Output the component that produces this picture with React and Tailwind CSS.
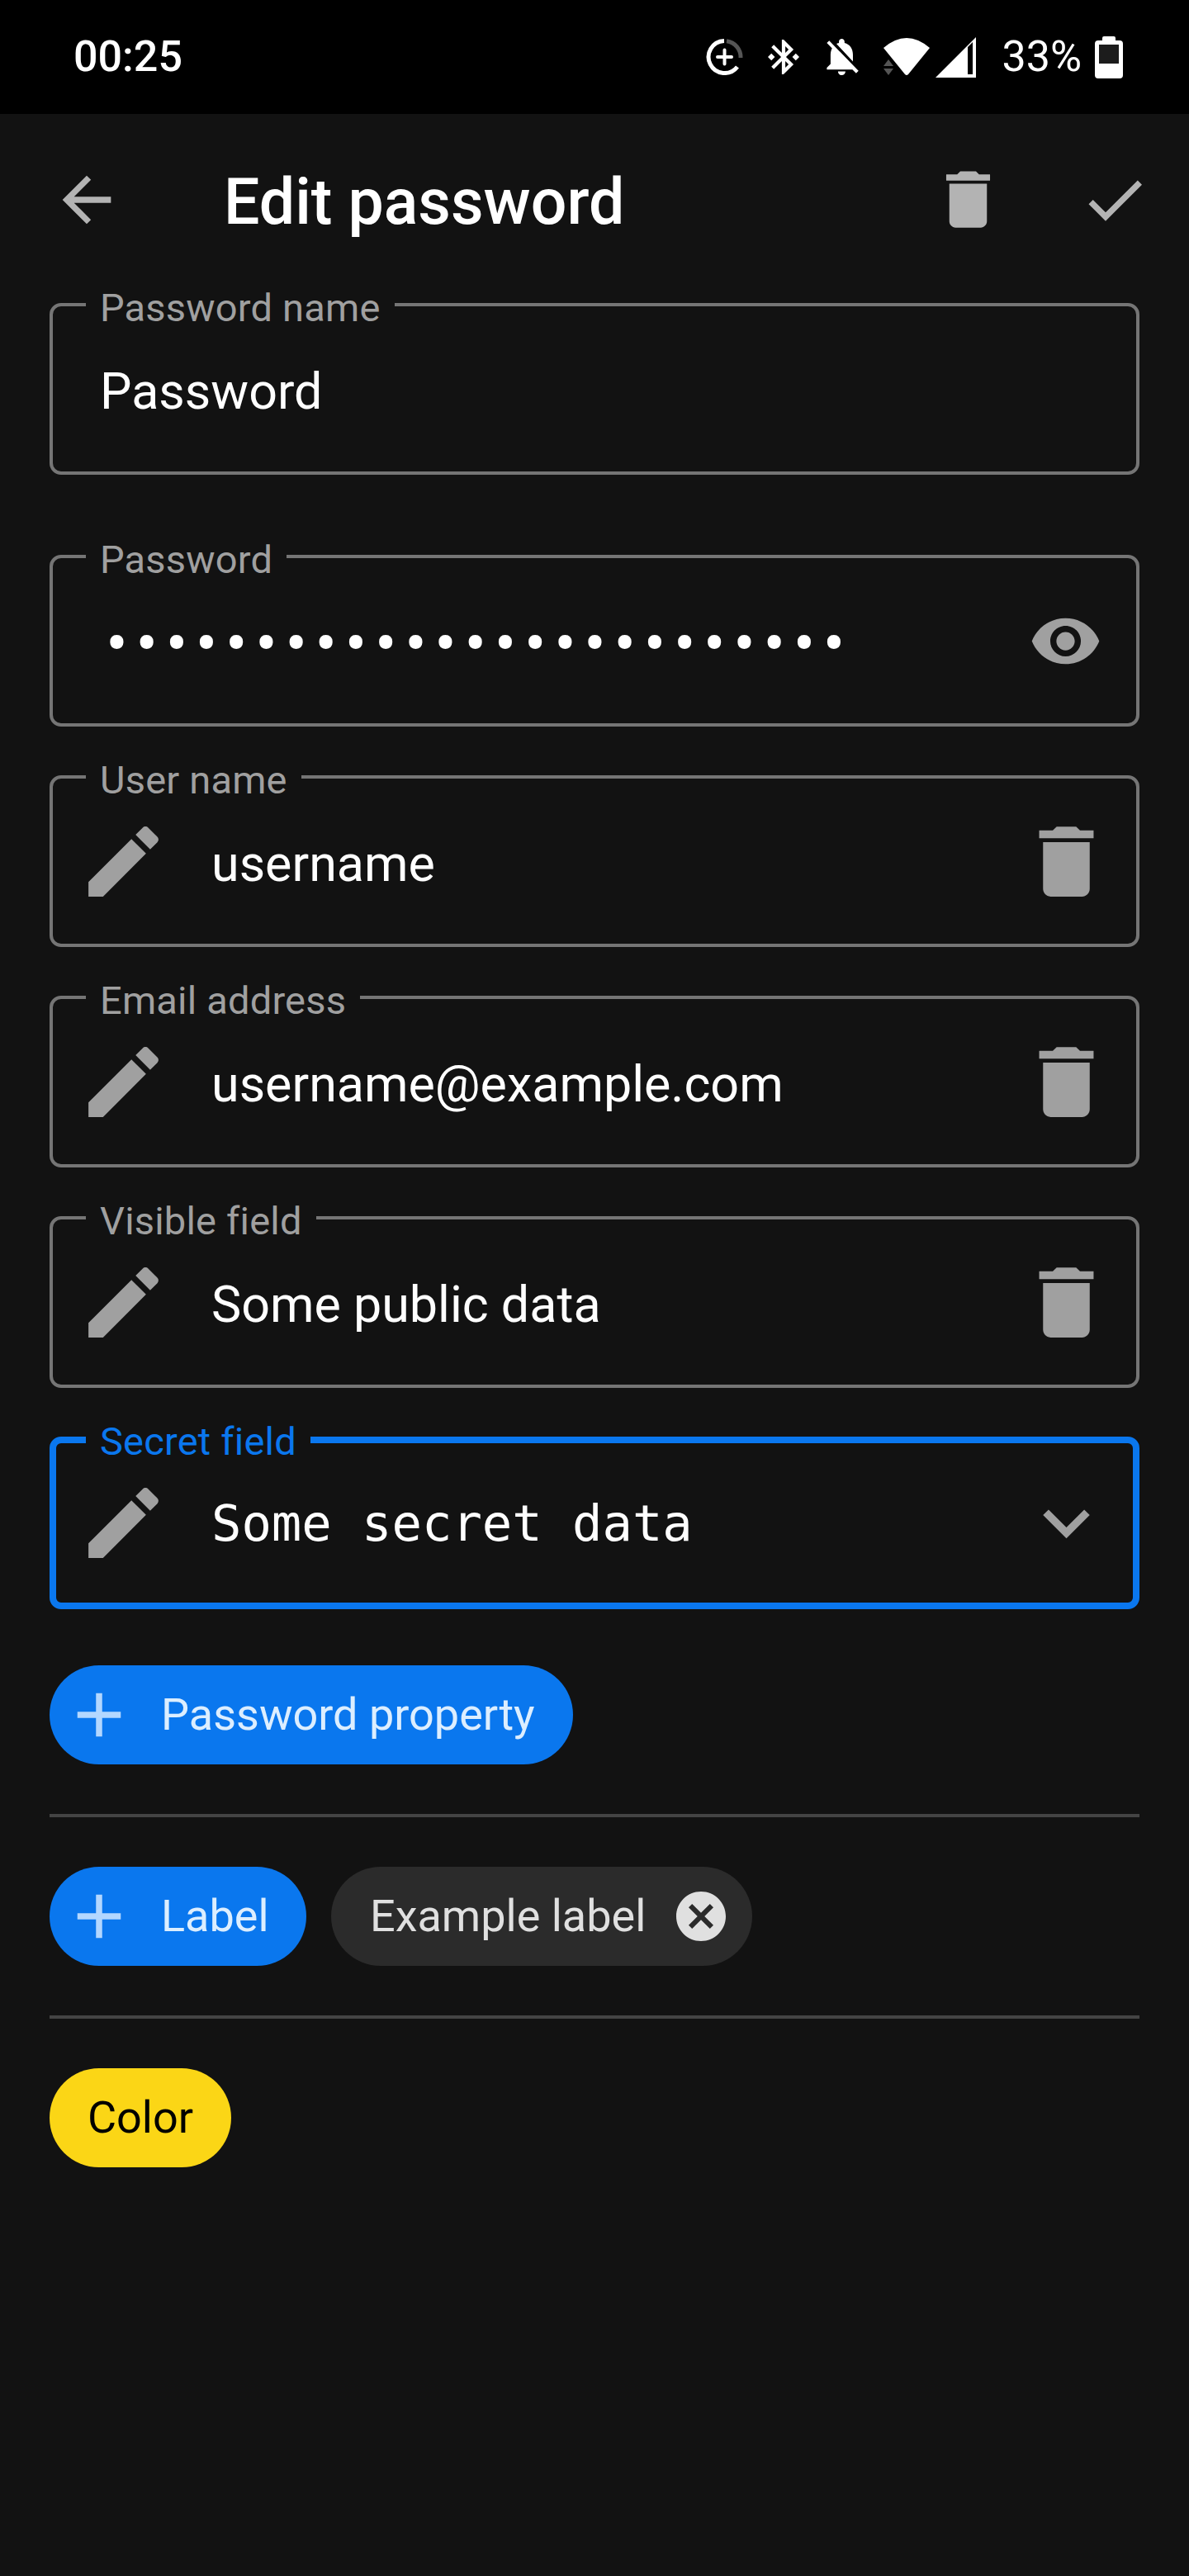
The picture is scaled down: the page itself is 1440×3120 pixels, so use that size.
import React from 'react';

const paths = {
  back: 'M20 11H7.83l5.59-5.59L12 4l-8 8 8 8 1.41-1.41L7.83 13H20v-2z',
  check: 'M9 16.17L4.83 12l-1.42 1.41L9 19 21 7l-1.41-1.41z',
  trash: 'M6 19c0 1.1.9 2 2 2h8c1.1 0 2-.9 2-2V7H6v12zM19 4h-3.5l-1-1h-5l-1 1H5v2h14V4z',
  edit: 'M3 17.25V21h3.75L17.81 9.94l-3.75-3.75L3 17.25zM20.71 7.04c.39-.39.39-1.02 0-1.41l-2.34-2.34c-.39-.39-1.02-.39-1.41 0l-1.83 1.83 3.75 3.75 1.83-1.83z',
  eye: 'M12 4.5C7 4.5 2.73 7.61 1 12c1.73 4.39 6 7.5 11 7.5s9.27-3.11 11-7.5c-1.73-4.39-6-7.5-11-7.5zM12 17c-2.76 0-5-2.24-5-5s2.24-5 5-5 5 2.24 5 5-2.24 5-5 5zm0-8c-1.66 0-3 1.34-3 3s1.34 3 3 3 3-1.34 3-3-1.34-3-3-3z',
  chevron: 'M16.59 8.59L12 13.17 7.41 8.59 6 10l6 6 6-6z',
  add: 'M19 13h-6v6h-2v-6H5v-2h6V5h2v6h6v2z',
  cancel: 'M12 2C6.47 2 2 6.47 2 12s4.47 10 10 10 10-4.47 10-10S17.53 2 12 2zm5 13.59L15.59 17 12 13.41 8.41 17 7 15.59 10.59 12 7 8.41 8.41 7 12 10.59 15.59 7 17 8.41 13.41 12 17 15.59z',
  bluetooth: 'M7 12l-2-2-2 2 2 2 2-2zm10.71-4.29L12 2h-1v7.59L6.41 5 5 6.41 10.59 12 5 17.59 6.41 19 11 14.41V22h1l5.71-5.71-4.3-4.29 4.3-4.29zM13 5.83l1.88 1.88L13 9.59V5.83zm1.88 10.46L13 18.17v-3.76l1.88 1.88zM19 10l-2 2 2 2 2-2-2-2z',
  bellOff: 'M20 18.69L7.84 6.14 5.27 3.49 4 4.76l2.8 2.8v.01c-.52.99-.8 2.16-.8 3.42v5l-2 2v1h13.73l2 2L21 19.72l-1-1.03zM12 22c1.11 0 2-.89 2-2h-4c0 1.11.89 2 2 2zm6-7.32V11c0-3.08-1.64-5.64-4.5-6.32V4c0-.83-.67-1.5-1.5-1.5s-1.5.67-1.5 1.5v.68c-.15.03-.29.08-.42.12-.1.03-.2.07-.3.11h-.01c-.2.08-.4.17-.59.27-.01 0-.01 0-.02.01L18 14.68z',
};

const Icon = ({ name, className }) => (
  <svg viewBox="0 0 24 24" fill="currentColor" className={`shrink-0 ${className}`}>
    <path d={paths[name]} />
  </svg>
);

const StatusBar = () => (
  <div className="h-[138px] bg-black text-white flex items-center justify-between pl-[89px] pr-[80px] font-['Roboto',sans-serif]">
    <span className="text-[52px] leading-none font-medium">00:25</span>
    <div className="flex items-center">
      <svg viewBox="0 0 45 44" className="w-[45px] h-[44px]" fill="none">
        <path d="M25 2.7 A19.5 19.5 0 0 1 42 23" stroke="#555" strokeWidth="5" />
        <path d="M22 2.5 A19.5 19.5 0 1 0 38 34" stroke="#fff" strokeWidth="5" />
        <path d="M14 22h17M22.5 13.5v17" stroke="#fff" strokeWidth="4" strokeLinecap="round" />
      </svg>
      <svg viewBox="3 2 18 20" fill="#fff" className="w-[38px] h-[46px] ml-[30px]"><path d={paths.bluetooth} /></svg>
      <svg viewBox="3.5 2.5 17.5 19.5" fill="#fff" className="w-[44px] h-[44px] ml-[30px]"><path d={paths.bellOff} /></svg>
      <svg viewBox="0 0 56 46" className="w-[56px] h-[46px] ml-[28px]">
        <path d="M0 12 Q28 -12 56 12 L30 44 Q28 46 26 44 Z" fill="#fff" />
        <path d="M6 26 L12 34 H0 Z M0 37 H12 L6 45 Z" fill="#555" />
      </svg>
      <svg viewBox="0 0 49 49" className="w-[49px] h-[49px] ml-[7px]">
        <path d="M0 49 L49 0 V49 Z M39 12 V45 H45 V6 Z" fill="#fff" fillRule="evenodd" />
      </svg>
      <span className="text-[52px] leading-none ml-[31px]">33%</span>
      <svg viewBox="0 0 34 51" className="w-[34px] h-[51px] ml-[16px]">
        <path d="M9 5 V2 Q9 0 11 0 H23 Q25 0 25 2 V5 H30 Q34 5 34 9 V47 Q34 51 30 51 H4 Q0 51 0 47 V9 Q0 5 4 5 Z" fill="#fff" />
        <rect x="5" y="10" width="24" height="23" fill="#1c1c1c" />
      </svg>
    </div>
  </div>
);

const Field = ({ label, focused, left, right, children }) => (
  <div className={`relative rounded-[14px] flex items-center ${focused ? 'h-[209px] border-[8px] border-[#0a77ee]' : 'h-[208px] border-[4px] border-[#757575]'}`}>
    <span className={`absolute bg-[#121212] px-[17px] text-[47px] leading-[44px] tracking-[0.2px] [font-variant-ligatures:none] whitespace-nowrap ${focused ? '-top-[24px] left-[36px] text-[#0a77ee]' : '-top-[20px] left-[40px] text-[#a0a0a0]'}`}>
      {label}
    </span>
    {left}
    <div className="flex-1 min-w-0">{children}</div>
    {right}
  </div>
);

const Value = ({ children }) => (
  <div className="pt-[6px] pl-[50px] text-[61px] leading-none text-white [font-variant-ligatures:none]">{children}</div>
);

const EditIcon = ({ shift }) => (
  <Icon name="edit" className={`w-[113px] h-[113px] text-[#a0a0a0] ${shift ? 'ml-[25px]' : 'ml-[29px]'}`} />
);

const TrashIcon = () => (
  <Icon name="trash" className="w-[113px] h-[113px] text-[#a0a0a0] mr-[28px]" />
);

const Pill = ({ children, width }) => (
  <div className={`h-[120px] rounded-full bg-[#0a77ee] flex items-center ${width}`}>
    <Icon name="add" className="w-[90px] h-[90px] ml-[15px] text-[#b3d7ff]" />
    <span className="ml-[30px] text-[54px] leading-none text-[#dceeff]">{children}</span>
  </div>
);

export default function App() {
  return (
    <div className="min-h-[3120px] bg-[#121212] font-['Roboto',sans-serif]">
      <StatusBar />

      {/* Toolbar */}
      <div className="h-[209px] flex items-center text-[#b3b3b3] pb-[2px]">
        <Icon name="back" className="w-[88px] h-[88px] ml-[61px]" />
        <h1 className="ml-[122px] flex-1 pt-[8px] text-[77px] leading-none font-medium text-white">Edit password</h1>
        <Icon name="trash" className="w-[91px] h-[91px]" />
        <Icon name="check" className="w-[88px] h-[88px] ml-[88px] mr-[46px]" />
      </div>

      <div className="px-[60px] pt-[20px]">
        <Field label="Password name">
          <div className="pt-[6px] pl-[57px] text-[61px] leading-none text-white">Password</div>
        </Field>

        <div className="mt-[97px] flex flex-col gap-[59px]">
          <Field
            label="Password"
            right={<Icon name="eye" className="w-[89px] h-[89px] text-[#a0a0a0] mr-[41px]" />}
          >
            <div className="pt-[8px] pl-[64px] text-[80px] leading-none text-white tracking-[9.2px] whitespace-nowrap">
              •••••••••••••••••••••••••
            </div>
          </Field>
          <Field label="User name" left={<EditIcon />} right={<TrashIcon />}>
            <Value>username</Value>
          </Field>
          <Field label="Email address" left={<EditIcon />} right={<TrashIcon />}>
            <Value>username@example.com</Value>
          </Field>
          <Field label="Visible field" left={<EditIcon />} right={<TrashIcon />}>
            <Value>Some public data</Value>
          </Field>
          <Field
            label="Secret field"
            focused
            left={<EditIcon shift />}
            right={<Icon name="chevron" className="w-[113px] h-[113px] text-[#a0a0a0] mr-[24px]" />}
          >
            <div className="pt-[2px] pl-[50px] font-['DejaVu_Sans_Mono',monospace] text-[60.5px] leading-none text-white">
              Some secret data
            </div>
          </Field>
        </div>

        <div className="mt-[68px]">
          <Pill width="w-[634px]">Password property</Pill>
        </div>

        <div className="mt-[60px] h-[4px] bg-[#444444]" />

        <div className="mt-[60px] flex gap-[30px]">
          <Pill width="w-[311px]">Label</Pill>
          <div className="h-[120px] w-[510px] rounded-full bg-[#2b2b2b] flex items-center pl-[47px]">
            <span className="text-[54px] leading-none text-[#e0e0e0]">Example label</span>
            <Icon name="cancel" className="w-[72px] h-[72px] ml-[31px] text-[#e0e0e0]" />
          </div>
        </div>

        <div className="mt-[60px] h-[4px] bg-[#444444]" />

        <div className="mt-[60px] h-[120px] w-[220px] rounded-full bg-[#fbd616] flex items-center justify-center">
          <span className="text-[54px] leading-none text-black">Color</span>
        </div>
      </div>
    </div>
  );
}
